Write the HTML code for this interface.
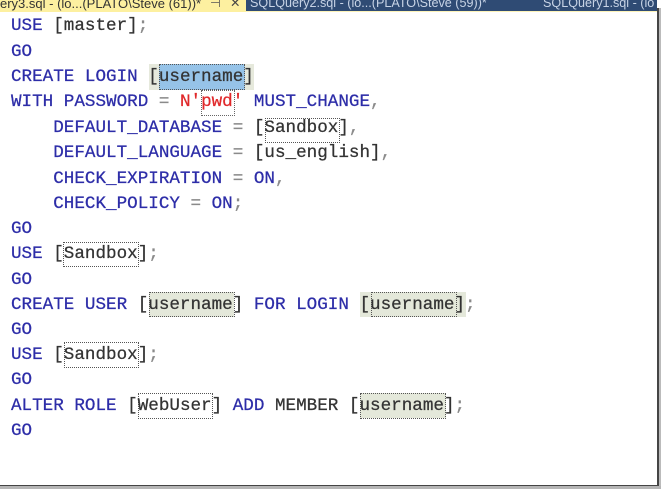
<!DOCTYPE html>
<html>
<head>
<meta charset="utf-8">
<style>
html,body{margin:0;padding:0;width:661px;height:489px;overflow:hidden;background:#fff}
#wrap{position:relative;width:661px;height:489px;overflow:hidden;background:#fff;filter:blur(.35px)}
.l{position:absolute;left:11px;margin-top:1.5px;white-space:pre;font:17.6px/20px "Liberation Mono",monospace;color:#3a3a3a;-webkit-text-stroke:.25px currentColor}
.k{color:#2d2da8}
.p{color:#8a8a8a}
.b{color:#333}
.r{color:#e0282a}
.h{position:absolute}
.d{position:absolute;border:1px dotted #555;box-sizing:border-box}
.t{position:absolute;top:-4px;height:15px;white-space:pre;font:12.6px/15px "Liberation Sans",sans-serif}
</style>
</head>
<body>
<div id="wrap">
<div class="h" style="left:0;top:0;width:246px;height:12px;background:#fdf0a0"></div>
<div class="h" style="left:246px;top:0;width:411px;height:11px;background:#2f4b74"></div>
<div class="h" style="left:246px;top:11px;width:411px;height:1px;background:#fdf3b8"></div>
<div class="t" style="left:0;color:#333;font-size:13px">ery3.sql - (lo...(PLATO\Steve (61))*</div>
<div class="t" style="left:210px;color:#555;">⊣</div>
<div class="t" style="left:230px;color:#444;">✕</div>
<div class="t" style="left:250px;color:#c8d4e6">SQLQuery2.sql - (lo...(PLATO\Steve (59))*</div>
<div class="t" style="left:543px;width:112px;overflow:hidden;color:#c8d4e6">SQLQuery1.sql - (lo</div>

<div class="h" style="left:657px;top:8px;width:2px;height:478px;background:#444"></div>
<div class="h" style="left:659px;top:8px;width:2px;height:481px;background:#bbb"></div>
<div class="h" style="left:0;top:485px;width:659px;height:1px;background:#444"></div>
<div class="h" style="left:0;top:486px;width:661px;height:3px;background:#b5b5b5"></div>

<!-- highlights -->
<div class="h" style="left:149px;top:64px;width:105px;height:26px;background:#e6e9dc"></div>
<div class="h" style="left:159px;top:64px;width:86px;height:26px;background:#96c3e8"></div>
<div class="d" style="left:159px;top:64px;width:86px;height:26px"></div>
<div class="d" style="left:201px;top:90px;width:34px;height:26px;border-color:#666"></div>
<div class="d" style="left:265px;top:118px;width:75px;height:25px;"></div>
<div class="d" style="left:63px;top:242px;width:76px;height:25px"></div>
<div class="h" style="left:149px;top:292px;width:85px;height:25px;background:#e4e8da"></div>
<div class="d" style="left:149px;top:292px;width:86px;height:25px"></div>
<div class="h" style="left:360px;top:292px;width:106px;height:25px;background:#e4e8da"></div>
<div class="d" style="left:371px;top:292px;width:86px;height:25px"></div>
<div class="d" style="left:64px;top:342px;width:75px;height:26px"></div>
<div class="d" style="left:138px;top:393px;width:75px;height:26px"></div>
<div class="h" style="left:360px;top:393px;width:86px;height:25px;background:#e4e8da"></div>
<div class="d" style="left:360px;top:393px;width:86px;height:26px"></div>

<!-- code -->
<div class="l" style="top:14px"><span class="k">USE</span> <span class="b">[master]</span><span class="p">;</span></div>
<div class="l" style="top:40px"><span class="k">GO</span></div>
<div class="l" style="top:65px"><span class="k">CREATE LOGIN</span> <span class="b">[username]</span></div>
<div class="l" style="top:90px"><span class="k">WITH PASSWORD</span> <span class="p">=</span> <span class="r">N'pwd'</span> <span class="k">MUST_CHANGE</span><span class="p">,</span></div>
<div class="l" style="top:116px">    <span class="k">DEFAULT_DATABASE</span> <span class="p">=</span> <span class="b">[Sandbox]</span><span class="p">,</span></div>
<div class="l" style="top:141px">    <span class="k">DEFAULT_LANGUAGE</span> <span class="p">=</span> <span class="b">[us_english]</span><span class="p">,</span></div>
<div class="l" style="top:167px">    <span class="k">CHECK_EXPIRATION</span> <span class="p">=</span> <span class="k">ON</span><span class="p">,</span></div>
<div class="l" style="top:192px">    <span class="k">CHECK_POLICY</span> <span class="p">=</span> <span class="k">ON</span><span class="p">;</span></div>
<div class="l" style="top:217px"><span class="k">GO</span></div>
<div class="l" style="top:242px"><span class="k">USE</span> <span class="b">[Sandbox]</span><span class="p">;</span></div>
<div class="l" style="top:268px"><span class="k">GO</span></div>
<div class="l" style="top:293px"><span class="k">CREATE USER</span> <span class="b">[username]</span> <span class="k">FOR LOGIN</span> <span class="b">[username]</span><span class="p">;</span></div>
<div class="l" style="top:318px"><span class="k">GO</span></div>
<div class="l" style="top:343px"><span class="k">USE</span> <span class="b">[Sandbox]</span><span class="p">;</span></div>
<div class="l" style="top:368px"><span class="k">GO</span></div>
<div class="l" style="top:394px"><span class="k">ALTER ROLE</span> <span class="b">[WebUser]</span> <span class="k">ADD</span> <span class="b">MEMBER</span> <span class="b">[username]</span><span class="p">;</span></div>
<div class="l" style="top:419px"><span class="k">GO</span></div>
</div>
</body>
</html>
